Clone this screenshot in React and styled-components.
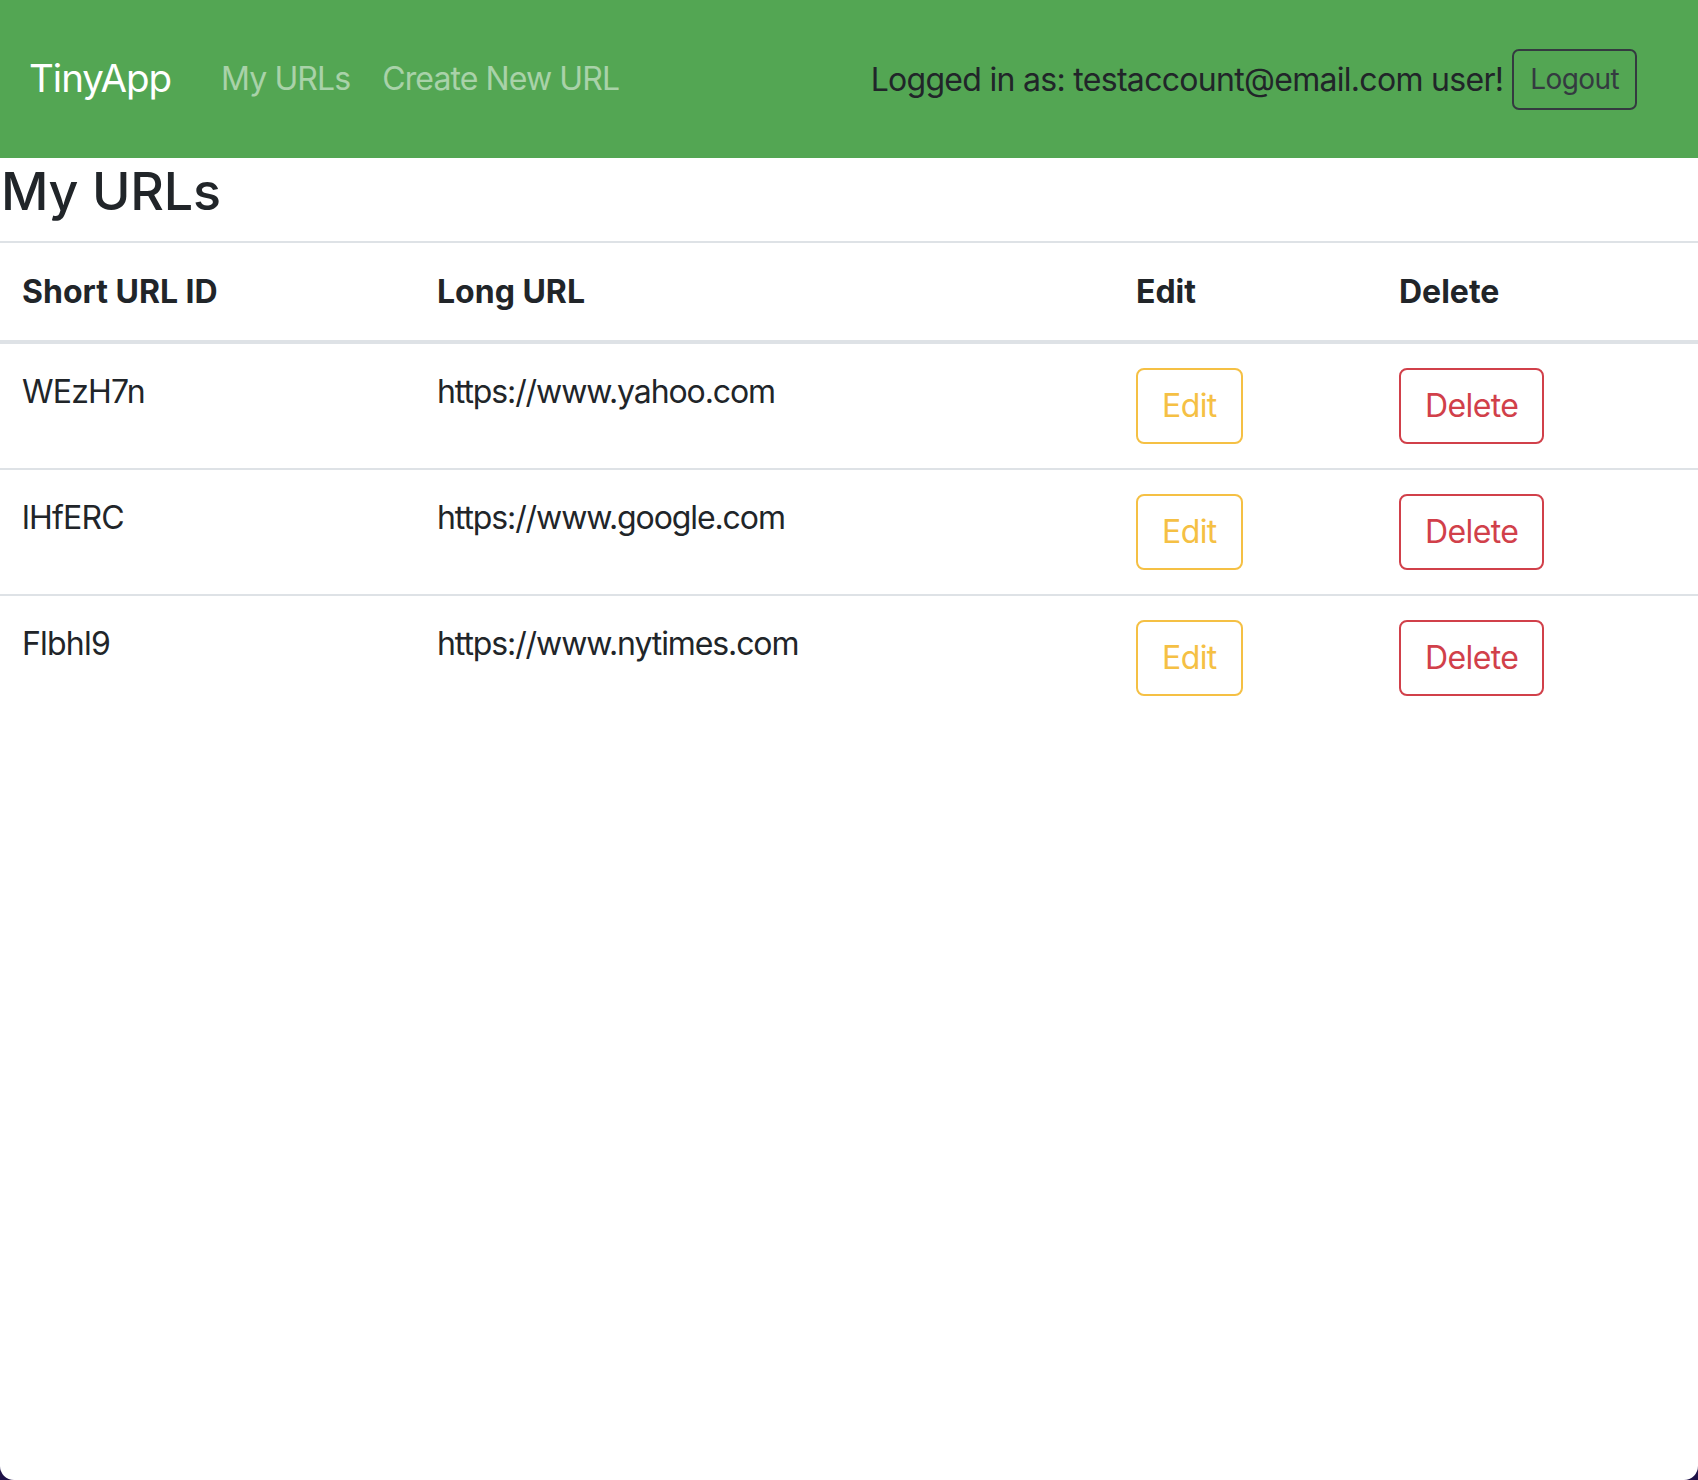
import React from "react";
import styled, { createGlobalStyle } from "styled-components";

const Global = createGlobalStyle`
  html, body {
    margin: 0;
    padding: 0;
    background: #1f1248;
  }
  body {
    font-family: Inter, "Noto Sans", "Liberation Sans", sans-serif;
    color: #212529;
  }
  * { box-sizing: border-box; }
`;

const Page = styled.div`
  min-height: 100vh;
  background: #ffffff;
  border-radius: 0 0 14px 14px;
  overflow: hidden;
`;

const Navbar = styled.nav`
  height: 158px;
  background: #53a653;
  display: flex;
  align-items: center;
  padding: 0 61px 0 29px;
`;

const Brand = styled.a`
  font-size: 38.5px;
  letter-spacing: -1px;
  color: #ffffff;
  text-decoration: none;
  margin-right: 34px;
  line-height: 1.5;
`;

const NavLink = styled.a`
  font-size: 32px;
  letter-spacing: -0.9px;
  color: rgba(255, 255, 255, 0.5);
  text-decoration: none;
  padding: 0 16px;
  line-height: 1.5;
`;

const UserArea = styled.div`
  margin-left: auto;
  display: flex;
  align-items: center;
  gap: 9px;
`;

const UserText = styled.span`
  font-size: 32px;
  letter-spacing: -0.7px;
  color: #212529;
`;

const LogoutButton = styled.button`
  font-family: inherit;
  font-size: 28px;
  letter-spacing: -0.6px;
  height: 61px;
  padding: 0 16px;
  background: transparent;
  color: #343a40;
  border: 2px solid #343a40;
  border-radius: 7px;
`;

const Heading = styled.h2`
  font-size: 52px;
  font-weight: 500;
  line-height: 68px;
  letter-spacing: -0.2px;
  margin: 0 0 15px 0;
  padding-left: 1px;
  color: #212529;
`;

const Table = styled.table`
  width: 100%;
  border-collapse: collapse;
  table-layout: fixed;
  font-size: 32px;
  line-height: 48px;
  letter-spacing: -0.8px;
  color: #212529;
`;

const HeadCell = styled.th`
  text-align: left;
  font-weight: 700;
  letter-spacing: 0;
  padding: 25px 24px 24px;
  vertical-align: bottom;
  border-top: 2px solid #dee2e6;
  border-bottom: 4px solid #dee2e6;
  &:first-child { padding-left: 22px; }
`;

const Cell = styled.td`
  padding: 24px;
  vertical-align: top;
  border-top: 2px solid #dee2e6;
  letter-spacing: ${(p) => (p.$tight ? "-1.1px" : "inherit")};
  &:first-child { padding-left: 22px; }
`;

const Row = styled.tr`
  &:first-child td { border-top: none; }
`;

const OutlineButton = styled.button`
  font-family: inherit;
  font-size: 32px;
  line-height: 48px;
  letter-spacing: -0.6px;
  padding: 12px 24px;
  background: transparent;
  border: 2px solid ${(p) => p.$color};
  color: ${(p) => p.$color};
  border-radius: 8px;
`;

const urls = [
  { id: "WEzH7n", long: "https://www.yahoo.com" },
  { id: "lHfERC", long: "https://www.google.com" },
  { id: "Flbhl9", long: "https://www.nytimes.com" },
];

export default function App() {
  return (
    <>
      <Global />
      <Page>
        <Navbar>
          <Brand href="#">TinyApp</Brand>
          <NavLink href="#">My URLs</NavLink>
          <NavLink href="#">Create New URL</NavLink>
          <UserArea>
            <UserText>Logged in as: testaccount@email.com user!</UserText>
            <LogoutButton>Logout</LogoutButton>
          </UserArea>
        </Navbar>
        <Heading>My URLs</Heading>
        <Table>
          <colgroup>
            <col style={{ width: "413px" }} />
            <col style={{ width: "699px" }} />
            <col style={{ width: "263px" }} />
            <col />
          </colgroup>
          <thead>
            <tr>
              <HeadCell>Short URL ID</HeadCell>
              <HeadCell>Long URL</HeadCell>
              <HeadCell>Edit</HeadCell>
              <HeadCell>Delete</HeadCell>
            </tr>
          </thead>
          <tbody>
            {urls.map((u) => (
              <Row key={u.id}>
                <Cell>{u.id}</Cell>
                <Cell $tight>{u.long}</Cell>
                <Cell>
                  <OutlineButton $color="#f5c044">Edit</OutlineButton>
                </Cell>
                <Cell>
                  <OutlineButton $color="#d1404a">Delete</OutlineButton>
                </Cell>
              </Row>
            ))}
          </tbody>
        </Table>
      </Page>
    </>
  );
}
